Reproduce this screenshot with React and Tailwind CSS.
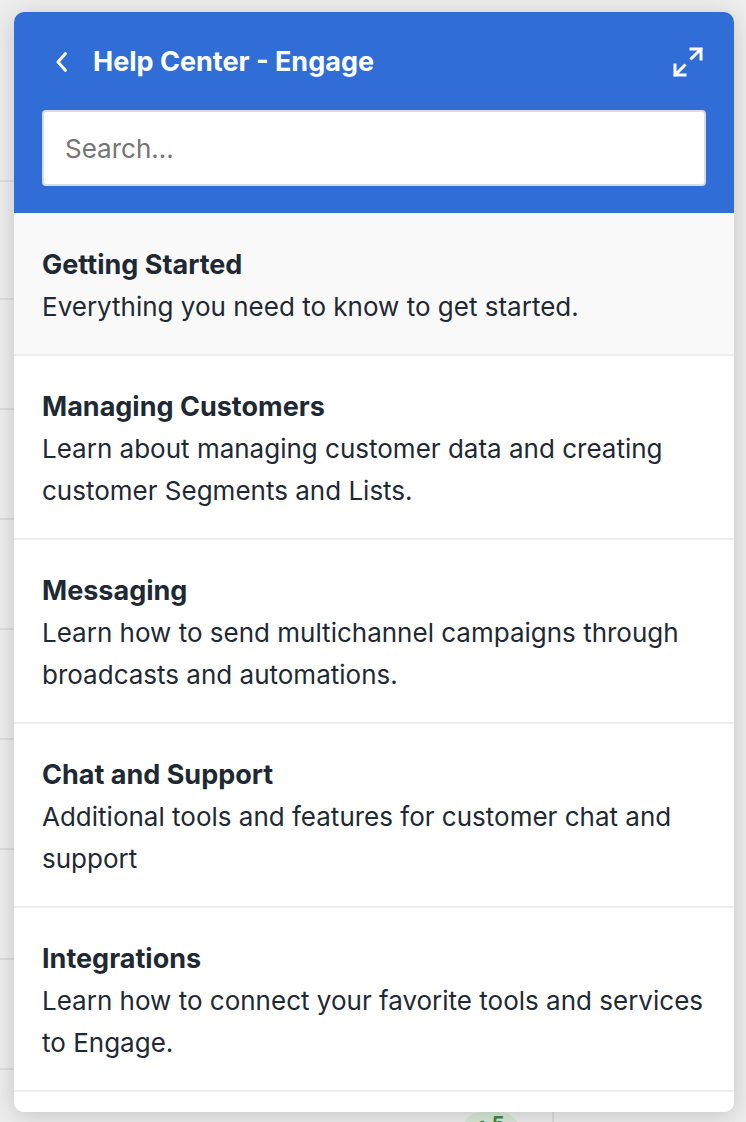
import React from "react";

const items = [
  { title: "Getting Started", desc: "Everything you need to know to get started.", active: true },
  { title: "Managing Customers", desc: "Learn about managing customer data and creating customer Segments and Lists." },
  { title: "Messaging", desc: "Learn how to send multichannel campaigns through broadcasts and automations." },
  { title: "Chat and Support", desc: "Additional tools and features for customer chat and support" },
  { title: "Integrations", desc: "Learn how to connect your favorite tools and services to Engage." },
];

export default function App() {
  return (
    <div
      className="relative w-[746px] h-[1122px] overflow-hidden bg-[#eeeeee]"
      style={{ fontFamily: 'Inter, "Liberation Sans", Arial, sans-serif' }}
    >
      <div className="absolute left-0 top-0 w-[14px] h-full">
        {[180, 298, 408, 518, 628, 738, 848, 958, 1068].map((y) => (
          <div key={y} className="absolute left-0 w-[14px] h-[2px] bg-[#dcdcdc]" style={{ top: y }} />
        ))}
      </div>
      <div className="absolute left-[462px] top-[1112px] w-[58px] h-[40px] rounded-full bg-[#d9ead9] flex justify-center pt-[2px]">
        <span className="text-[#3b8a4a] text-[20px] font-bold leading-none">• 5</span>
      </div>
      <div className="absolute left-[552px] top-[1100px] w-[2px] h-[30px] bg-[#dcdcdc]" />

      <div className="absolute left-[14px] top-[12px] w-[720px] h-[1100px] rounded-[10px] overflow-hidden bg-white shadow-[0_4px_24px_rgba(0,0,0,0.18)] flex flex-col">
        <div className="bg-[#306dd7] px-[28px] pt-[26px] pb-[27px] flex flex-col gap-[24px]">
          <div className="h-[48px] flex items-center">
            <svg width="14" height="22" viewBox="0 0 14 22" className="ml-[13px]" fill="none">
              <path d="M10.5 2.5 L3 11 L10.5 19.5" stroke="white" strokeWidth="3" strokeLinecap="round" strokeLinejoin="round" />
            </svg>
            <div className="ml-[24px] text-white text-[27px] font-bold">Help Center - Engage</div>
            <div className="flex-1" />
            <svg width="32" height="32" viewBox="0 0 32 32" className="mr-[2px]" fill="none">
              <path d="M19 3 H29 V13 M29 3 L19.5 12.5" stroke="white" strokeWidth="3" strokeLinecap="square" />
              <path d="M13 29 H3 V19 M3 29 L12.5 19.5" stroke="white" strokeWidth="3" strokeLinecap="square" />
            </svg>
          </div>
          <div className="h-[76px] bg-white rounded-[4px] border-2 border-[#d9dde3] flex items-center px-[21px]">
            <span className="text-[26px] text-[#757575]">Search...</span>
          </div>
        </div>
        <div className="flex flex-col">
          {items.map((it) => (
            <div
              key={it.title}
              className={`px-[28px] pb-[26px] border-b-2 border-[#eeeeee] ${it.active ? "bg-[#f9f9f9] pt-[31px]" : "bg-white pt-[30px]"}`}
            >
              <div className="text-[27px] leading-[42px] font-bold text-[#1f2933]">{it.title}</div>
              <div className="text-[26px] leading-[42px] text-[#1f2933]">{it.desc}</div>
            </div>
          ))}
          <div className="h-[60px] bg-white" />
        </div>
      </div>
    </div>
  );
}
